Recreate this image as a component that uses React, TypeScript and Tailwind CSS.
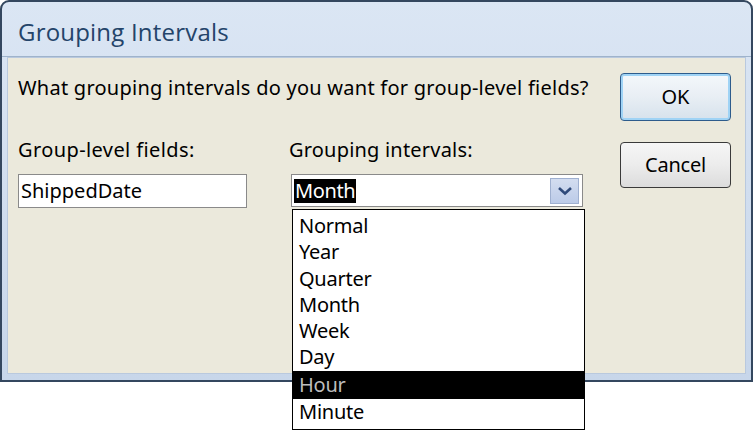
import React from "react";

const items = ["Normal", "Year", "Quarter", "Month", "Week", "Day", "Hour", "Minute"];

export default function App() {
  return (
    <div
      className="relative w-[756px] h-[430px] bg-white overflow-hidden"
      style={{ fontFamily: "'Noto Sans', sans-serif" }}
    >
      <div className="w-[753px] h-[382px] rounded-t-[9px] border-2 border-[#34475f] bg-gradient-to-b from-[#dbe6f4] to-[#c7d6ea] flex flex-col">
        <div className="h-[55px] shrink-0 flex items-center pl-[16px] pt-[6px] border-b border-[#9fb3cb]">
          <span
            className="text-[24px] text-[#24446a] tracking-[0.2px]"
            style={{ fontFamily: "'Open Sans', 'Noto Sans', sans-serif" }}
          >
            Grouping Intervals
          </span>
        </div>
        <div className="flex-1 mx-[5px] mb-[6px] bg-[#ebe9dc] border border-[#b9c9de] relative flex">
          <div className="flex-1 flex flex-col pl-[10px]">
            <div className="mt-[17px] text-[20px] text-black leading-[26px] tracking-[0.25px]">
              What grouping intervals do you want for group-level fields?
            </div>
            <div className="flex mt-[36px]">
              <div className="w-[271px] flex flex-col">
                <div className="text-[20px] leading-[26px] text-black tracking-[0.4px]">Group-level fields:</div>
                <div className="mt-[11px] w-[229px] h-[34px] border border-[#8a8a8a] bg-white flex items-center pl-[2px] text-[20px] text-black">
                  ShippedDate
                </div>
              </div>
              <div className="flex flex-col">
                <div className="text-[20px] leading-[26px] text-black tracking-[0.2px]">Grouping intervals:</div>
                <div className="mt-[11px] ml-[2px] w-[292px] h-[33px] border border-[#8a8a8a] bg-white flex items-center pl-[1px] pr-[3px]">
                  <span className="ml-[1px] bg-black text-white text-[20px] leading-[24px] px-[1px] tracking-[-0.4px]">Month</span>
                  <div className="ml-auto w-[29px] h-[26px] border border-[#9fb0d0] bg-gradient-to-b from-[#d3ddf0] to-[#bccbe8] flex items-center justify-center">
                    <svg width="16" height="10" viewBox="0 0 16 10">
                      <path d="M2 2 L8 7.5 L14 2" fill="none" stroke="#2f4a7a" strokeWidth="2.6" />
                    </svg>
                  </div>
                </div>
              </div>
            </div>
          </div>
          <div className="w-[125px] flex flex-col pt-[15px]">
            <div className="w-[111px] h-[48px] rounded-[4px] border border-[#2d5c8c] shadow-[inset_0_0_0_2px_#9fd3f5] bg-gradient-to-b from-[#f4f8fb] via-[#e8eef4] to-[#d6e2ec] flex items-center justify-center text-[20px] text-black">
              OK
            </div>
            <div className="mt-[21px] w-[111px] h-[46px] rounded-[4px] border border-[#3a3a3a] bg-gradient-to-b from-[#f6f6f6] via-[#ececec] to-[#dcdcdc] flex items-center justify-center text-[20px] text-black tracking-[-0.25px]">
              Cancel
            </div>
          </div>
        </div>
      </div>
      <div className="absolute left-[292px] top-[209px] w-[293px] h-[221px] bg-white border border-black flex flex-col pt-[3px]">
        {items.map((it) => (
          <div
            key={it}
            className={
              it === "Hour"
                ? "h-[28px] bg-black text-[#bdbdbd] text-[20px] leading-[28px] pl-[6px] tracking-[-0.25px]"
                : "h-[26.3px] text-black text-[20px] leading-[26px] pl-[6px] tracking-[-0.25px]"
            }
          >
            {it}
          </div>
        ))}
      </div>
    </div>
  );
}
